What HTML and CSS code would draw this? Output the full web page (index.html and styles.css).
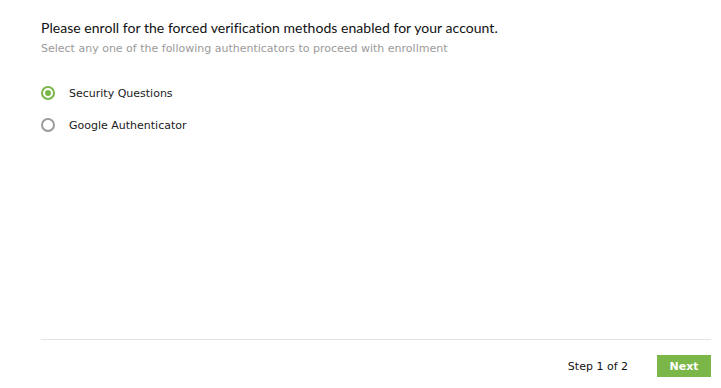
FILE: index.html
```html
<!DOCTYPE html>
<html lang="en">
<head>
    <meta charset="UTF-8">
    <meta name="viewport" content="width=device-width, initial-scale=1.0">
    <title>Enroll Authenticator</title>
    <link rel="stylesheet" href="styles.css">
</head>
<body>
    <div class="page">
        <div class="main">
            <h1 class="title">Please enroll for the forced verification methods enabled for your account.</h1>
            <p class="subtitle">Select any one of the following authenticators to proceed with enrollment</p>

            <div class="options">
                <label class="option">
                    <input type="radio" name="auth" checked>
                    <span class="radio"></span>
                    <span class="option-label">Security Questions</span>
                </label>
                <label class="option">
                    <input type="radio" name="auth">
                    <span class="radio"></span>
                    <span class="option-label">Google Authenticator</span>
                </label>
            </div>
        </div>

        <div class="footer">
            <span class="step">Step 1 of 2</span>
            <button class="next-btn">Next</button>
        </div>
    </div>
</body>
</html>
```

FILE: styles.css
```css
:root {
    --text-color: #1a1a1a;
    --muted-color: #9a9a9a;
    --accent-color: #7ab648;
    --radio-color: #9b9b9b;
    --border-color: #e3e3e3;
}

body {
    margin: 0;
    background: #ffffff;
    color: var(--text-color);
    font-family: "DejaVu Sans", Verdana, sans-serif;
}

.page {
    padding: 19px 10px 0 41px;
}

.main {
    height: 320px;
}

.title {
    margin: 0;
    font-family: Lato, "Open Sans", sans-serif;
    font-size: 14px;
    font-weight: 400;
    line-height: 18px;
    letter-spacing: 0.04px;
    color: #111111;
}

.subtitle {
    margin: 5px 0 0;
    font-size: 11px;
    line-height: 14px;
    color: var(--muted-color);
}

.options {
    margin-top: 21px;
}

.option {
    display: flex;
    align-items: center;
    height: 32px;
    cursor: pointer;
}

.option input {
    display: none;
}

.radio {
    width: 10px;
    height: 10px;
    border: 2px solid var(--radio-color);
    border-radius: 50%;
    position: relative;
}

.option input:checked + .radio {
    border-color: var(--accent-color);
}

.option input:checked + .radio::after {
    content: "";
    position: absolute;
    top: 2px;
    left: 2px;
    width: 6px;
    height: 6px;
    border-radius: 50%;
    background: var(--accent-color);
}

.option-label {
    margin-left: 14px;
    font-size: 11px;
    color: var(--text-color);
}

.footer {
    display: flex;
    justify-content: flex-end;
    align-items: center;
    gap: 29px;
    border-top: 1px solid var(--border-color);
    padding-top: 15px;
}

.step {
    font-size: 11px;
    color: #111111;
}

.next-btn {
    width: 54px;
    height: 22px;
    border: none;
    padding: 0;
    background: var(--accent-color);
    color: #ffffff;
    font-family: "DejaVu Sans", Verdana, sans-serif;
    font-size: 11px;
    font-weight: 700;
}
```
